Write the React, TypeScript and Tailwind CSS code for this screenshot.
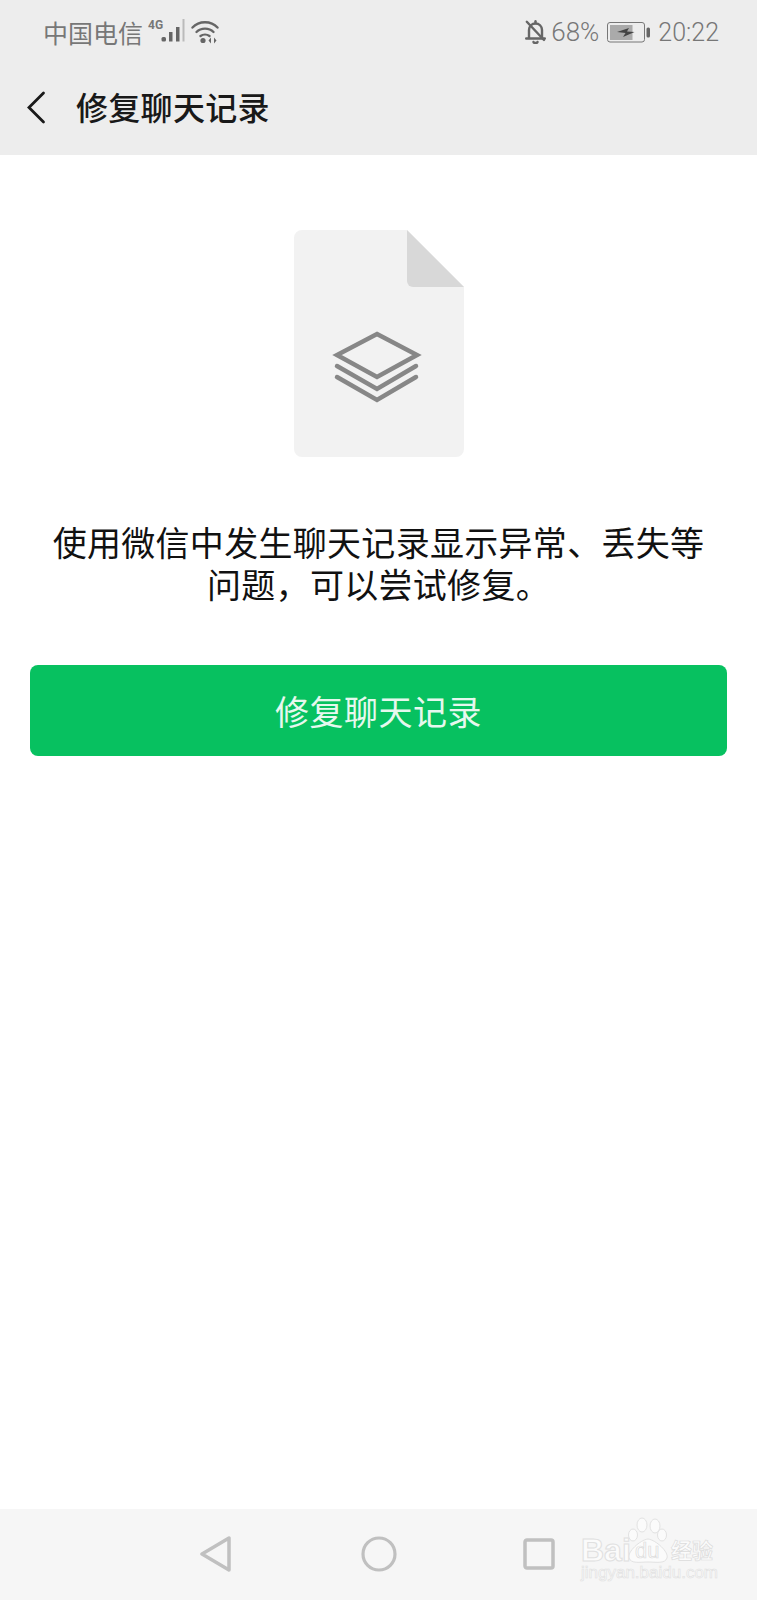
const CJK = "font-['Noto_Sans_CJK_SC','Noto_Sans',sans-serif]";

function Signal() {
  return (
    <svg width="38" height="32" viewBox="0 0 38 32" className="ml-[4px]">
      <text x="1" y="13" fontSize="12" fontWeight="700" fill="#777" fontFamily="Roboto, sans-serif">4G</text>
      <rect x="14.5" y="21" width="4.5" height="4.5" fill="#666" rx="1.5" />
      <rect x="22" y="16" width="3.5" height="9.5" fill="#666" />
      <rect x="29" y="11" width="3.5" height="14.5" fill="#666" />
      <rect x="35.5" y="3" width="2" height="22.5" fill="#bbb" />
    </svg>
  );
}

function Wifi() {
  return (
    <svg width="28" height="24" viewBox="0 0 28 24" fill="none" stroke="#666" strokeWidth="2.4" strokeLinecap="round">
      <path d="M1.5 7.5 C8 0.5 20 0.5 26.5 7.5" />
      <path d="M5.5 12 C10 7.5 18 7.5 22.5 12" />
      <path d="M9.5 16 C12 14.2 16 14.2 18.5 16" />
      <circle cx="12" cy="20.5" r="2.6" fill="#666" stroke="none" />
      <path d="M20 17.5 L17.5 20.5 L20 23.5 Z M23 17.5 L25.5 20.5 L23 23.5 Z" fill="#666" stroke="none" />
    </svg>
  );
}

function BellOff() {
  return (
    <svg width="21" height="24" viewBox="0 0 21 24" fill="none" stroke="#666" strokeWidth="2.4" strokeLinecap="round" strokeLinejoin="round">
      <path d="M4 18 V10 C4 6 7 3.5 10.5 3.5 C14 3.5 17 6 17 10 V18" />
      <path d="M1.2 18.5 H19.8" />
      <path d="M1.8 1.8 L19 20" />
      <path d="M8.5 22 C9 23.4 12 23.4 12.5 22" />
      <path d="M10.5 1.3 V3" />
    </svg>
  );
}

function Battery() {
  return (
    <svg width="44" height="21" viewBox="0 0 44 21">
      <rect x="0.5" y="0.5" width="37" height="19.5" rx="2.5" fill="none" stroke="#777" strokeWidth="1" />
      <rect x="3" y="3" width="22.5" height="15" fill="#aaa" />
      <path d="M10 10 L22 6 L20 9.5 L27.5 10 L16 15 L18.5 11 Z" fill="#444" />
      <rect x="39.5" y="5.5" width="3.5" height="10" rx="1.5" fill="#666" />
    </svg>
  );
}

function DocIcon() {
  return (
    <svg width="172" height="230" viewBox="0 0 172 230">
      <path d="M8 1 H114 L171 58 V220 A8 8 0 0 1 163 228 H9 A8 8 0 0 1 1 220 V9 A8 8 0 0 1 9 1 Z" fill="#f2f2f2" />
      <path d="M114 1 L171 58 H120 A6 6 0 0 1 114 52 Z" fill="#d8d8d8" />
      <g fill="none" stroke="#878787" strokeWidth="4.5">
        <path d="M84 105 L124 126 L84 148 L44 126 Z" strokeLinejoin="miter" />
        <path d="M44 137 L84 160 L123 137" strokeLinecap="round" />
        <path d="M44 148 L84 171 L123 148" strokeLinecap="round" />
      </g>
    </svg>
  );
}

export default function App() {
  return (
    <div className={`relative w-[757px] h-[1600px] bg-white flex flex-col ${CJK}`}>
      <div className="h-[155px] bg-[#ededed] flex flex-col shrink-0">
        <div className="h-[64px] pl-[43px] pr-[38px] flex items-center justify-between text-[#777777] text-[25px] leading-none">
          <div className="flex items-center">
            <span>中国电信</span>
            <Signal />
            <span className="ml-[6px] flex"><Wifi /></span>
          </div>
          <div className="flex items-center font-['Roboto',sans-serif] font-light">
            <BellOff />
            <span className="ml-[5px] text-[26px]">68%</span>
            <span className="ml-[8px] flex"><Battery /></span>
            <span className="ml-[7px]">20:22</span>
          </div>
        </div>
        <div className="flex-1 flex items-center pl-[26px]">
          <svg width="20" height="35" viewBox="0 0 20 35" fill="none" stroke="#1a1a1a" strokeWidth="2.8" className="mb-[5px]">
            <path d="M17.5 3 L3 17.5 L17.5 32" strokeLinecap="round" />
          </svg>
          <span className="ml-[30px] text-[32px] leading-none font-medium text-[#191919] tracking-[0.3px] mb-[7px]">修复聊天记录</span>
        </div>
      </div>

      <div className="flex-1 flex flex-col items-center">
        <div className="mt-[74px] flex"><DocIcon /></div>
        <p className="mt-[62px] w-[700px] text-center text-[34px] leading-[42px] tracking-[0.3px] text-[#111111]">
          使用微信中发生聊天记录显示异常、丢失等
          <br />
          问题，可以尝试修复。
        </p>
        <button className="mt-[60px] w-[697px] h-[91px] rounded-[8px] bg-[#07c160] text-[#e6f8ee] text-[34px] leading-none tracking-[0.5px] flex items-center justify-center">
          修复聊天记录
        </button>
      </div>

      <div className="h-[91px] bg-[#f6f6f6] flex items-center shrink-0 pl-[200px]">
        <svg width="32" height="36" viewBox="0 0 32 36" fill="none" stroke="#c0c0c0" strokeWidth="3.5" strokeLinejoin="round" className="mt-[-2px]">
          <path d="M29 2 V34 L2 18 Z" />
        </svg>
        <svg width="36" height="36" viewBox="0 0 36 36" fill="none" stroke="#c0c0c0" strokeWidth="3.2" className="ml-[129px] mt-[-2px]">
          <circle cx="18" cy="18" r="16" />
        </svg>
        <svg width="32" height="32" viewBox="0 0 32 32" fill="none" stroke="#c0c0c0" strokeWidth="3.5" className="ml-[126px] mt-[-2px]">
          <rect x="2" y="2" width="28" height="28" rx="2" />
        </svg>
      </div>

      <div className="absolute left-[580px] top-[1516px] w-[140px] h-[76px]">
        <svg width="140" height="76" viewBox="0 0 140 76" className="absolute left-0 top-0">
          <g fill="#fbfbfb" stroke="#e2e2e2" strokeWidth="1">
            <ellipse cx="62" cy="9" rx="5" ry="7" />
            <ellipse cx="75" cy="10" rx="5" ry="7" />
            <ellipse cx="53" cy="19" rx="4.5" ry="6" />
            <ellipse cx="82" cy="19" rx="4.5" ry="6" />
            <path d="M68 23 C76 24 89 36 87 42 C85 48 76 46 68 46 C60 46 51 48 49 42 C47 36 60 24 68 23 Z" />
          </g>
        </svg>
        <span className="absolute left-[1px] top-[18px] text-[#fbfbfb] text-[32px] leading-none font-['Liberation_Sans',sans-serif] font-bold [-webkit-text-stroke:1px_#e0e0e0]">Bai</span>
        <span className="absolute left-[55px] top-[24px] text-[#fbfbfb] text-[22px] leading-none font-['Liberation_Sans',sans-serif] [-webkit-text-stroke:0.7px_#dcdcdc]">du</span>
        <span className="absolute left-[91px] top-[23px] text-[#fbfbfb] text-[21px] leading-none font-bold [-webkit-text-stroke:0.7px_#dcdcdc]">经验</span>
        <span className="absolute left-[1px] top-[48px] text-[#fbfbfb] text-[17px] leading-none font-['Liberation_Sans',sans-serif] [-webkit-text-stroke:0.6px_#e0e0e0]">jingyan.baidu.com</span>
      </div>
    </div>
  );
}
